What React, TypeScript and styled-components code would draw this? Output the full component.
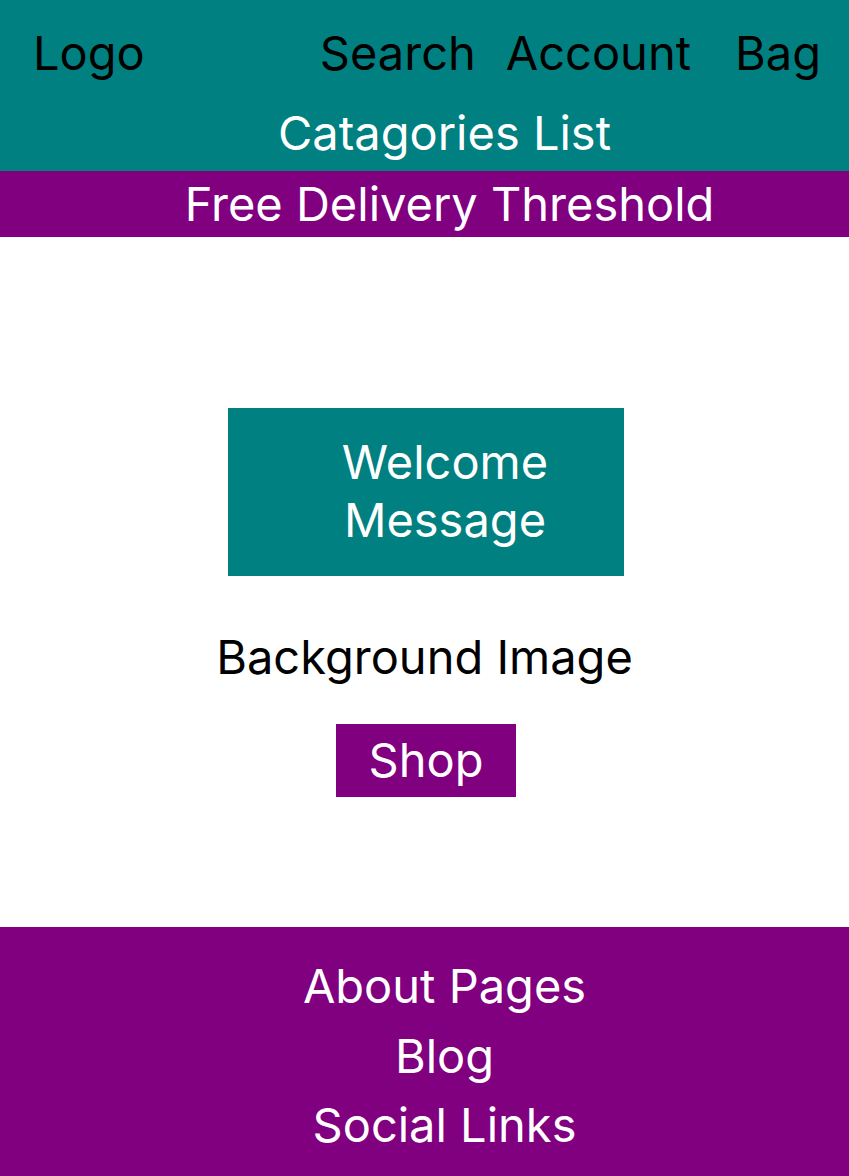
import styled, { createGlobalStyle } from "styled-components";

const GlobalStyle = createGlobalStyle`
  body {
    margin: 0;
    font-family: Inter, "Noto Sans", sans-serif;
    font-size: 47px;
    background: #ffffff;
  }
`;

const TEAL = "#008080";
const PURPLE = "#800080";

const App = () => {
  return (
    <Page>
      <GlobalStyle />
      <Header>
        <TopRow>
          <Logo>Logo</Logo>
          <Nav>
            <NavItem>Search</NavItem>
            <NavItem>Account</NavItem>
            <NavItem space={44}>Bag</NavItem>
          </Nav>
        </TopRow>
        <Categories>Catagories List</Categories>
      </Header>
      <DeliveryBar>Free Delivery Threshold</DeliveryBar>
      <Hero>
        <WelcomeBox>Welcome Message</WelcomeBox>
        <HeroCaption>Background Image</HeroCaption>
        <ShopButton>Shop</ShopButton>
      </Hero>
      <Footer>
        <FooterLink>About Pages</FooterLink>
        <FooterLink>Blog</FooterLink>
        <FooterLink>Social Links</FooterLink>
      </Footer>
    </Page>
  );
};

const Page = styled.div`
  display: flex;
  flex-direction: column;
  min-height: 1176px;
  line-height: 58px;
`;

const Header = styled.header`
  background: ${TEAL};
  padding: 24px 0 9px;
  display: flex;
  flex-direction: column;
  gap: 22px;
`;

const TopRow = styled.div`
  display: flex;
  align-items: center;
  padding: 0 28px 0 33px;
  color: #000000;
`;

const Logo = styled.div``;

const Nav = styled.nav`
  margin-left: auto;
  display: flex;
`;

const NavItem = styled.div<{ space?: number }>`
  margin-left: ${({ space }) => (space ?? 30)}px;
  &:first-child {
    margin-left: 0;
  }
`;

const Categories = styled.div`
  color: #ffffff;
  text-align: center;
  padding-left: 40px;
`;

const DeliveryBar = styled.div`
  background: ${PURPLE};
  color: #ffffff;
  text-align: center;
  padding: 4px 0 4px 50px;
`;

const Hero = styled.main`
  display: flex;
  flex-direction: column;
  align-items: center;
  padding: 171px 0 130px;
`;

const WelcomeBox = styled.div`
  box-sizing: border-box;
  width: 396px;
  height: 168px;
  margin-left: 3px;
  padding: 0 20px 3px 58px;
  display: flex;
  align-items: center;
  justify-content: center;
  text-align: center;
  background: ${TEAL};
  color: #ffffff;
`;

const HeroCaption = styled.div`
  margin-top: 52px;
  color: #000000;
`;

const ShopButton = styled.div`
  margin-top: 38px;
  margin-left: 3px;
  padding: 7px 33px 8px;
  background: ${PURPLE};
  color: #ffffff;
`;

const Footer = styled.footer`
  flex: 1;
  background: ${PURPLE};
  color: #ffffff;
  padding: 24px 0 23px 40px;
  display: flex;
  flex-direction: column;
  align-items: center;
  line-height: 69.5px;
`;

const FooterLink = styled.div``;

export default App;
